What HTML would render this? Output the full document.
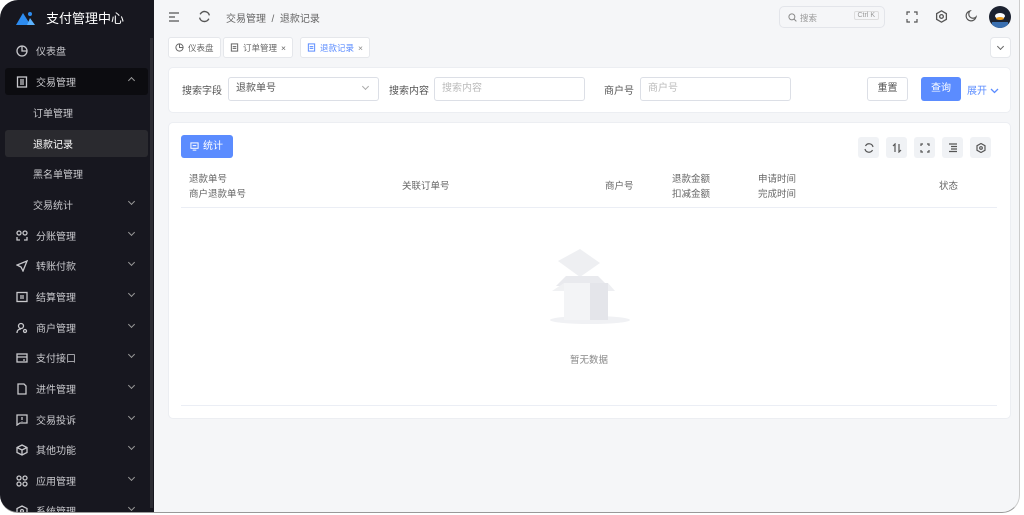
<!DOCTYPE html>
<html><head><meta charset="utf-8"><style>
*{box-sizing:border-box;margin:0;padding:0}
body{width:1024px;height:515px;background:#fff;font-family:"Liberation Sans","Noto Sans CJK SC",sans-serif;font-size:10px;color:#333;position:relative;overflow:hidden}
#app{position:absolute;left:0;top:0;width:1020px;height:513px;border-radius:18px 0 18px 18px;overflow:hidden;background:#f5f6f8;border-right:1px solid #ccc;border-bottom:1px solid #999}
#side{position:absolute;left:0;top:0;width:154px;height:100%;background:#17171f;color:#c8c8cc}
#side .sb{position:absolute;left:150px;top:38px;width:3px;height:470px;background:#2c2c33}
.logo{position:absolute;left:16px;top:8px;color:#fff;font-size:13px;display:flex;align-items:center;gap:8px}
.it{position:absolute;left:5px;width:143px;height:27px;display:flex;align-items:center;padding-left:11px;font-size:10px;border-radius:3px}
.it svg{width:12px;height:12px;margin-right:8px;stroke:#c8c8cc;fill:none;stroke-width:1.3}
.it .ar{position:absolute;right:14px;top:8px;width:5px;height:5px;border-right:1px solid #999;border-bottom:1px solid #999;transform:rotate(45deg)}
.it.sub{padding-left:28px}
#main{position:absolute;left:154px;top:0;right:0;bottom:0}
.card{position:absolute;background:#fff;border-radius:5px;border:1px solid #eceef2}
.inp{position:absolute;height:24px;border:1px solid #dcdfe6;border-radius:3px;padding-left:7px;line-height:22px;color:#bbb;background:#fff}
.lbl{position:absolute;color:#555}
.ib{position:absolute;top:137px;width:21px;height:21px;background:#f0f2f5;border-radius:3px;display:flex;align-items:center;justify-content:center}
.ib svg{width:10px;height:10px;stroke:#555;fill:none;stroke-width:1.2}
.th{position:absolute;color:#666;font-size:9.5px;line-height:15px}
.tab{position:absolute;top:37px;height:21px;background:#fff;border:1px solid #e5e7eb;border-radius:3px;display:flex;align-items:center;padding:0 6px;font-size:8.5px;color:#666;gap:4px}
.tab svg{width:9px;height:9px;fill:none;stroke:currentColor;stroke-width:1.1}
</style></head><body>
<div id="app">
<div id="side">
<div class="logo"><svg width="22" height="16" viewBox="0 0 22 16"><path d="M0 15 L7 3 L12 11 L14 15Z" fill="#2d8cf0"/><circle cx="14" cy="4" r="2" fill="#2d8cf0"/><path d="M11 15 L14 8 L19 15Z" fill="#5cb3ff"/></svg>支付管理中心</div>
<div class="it" style="top:37px"><svg viewBox="0 0 12 12"><circle cx="6" cy="6" r="5"/><path d="M6 1v5h5"/></svg>仪表盘</div>
<div class="it" style="top:68px;background:#0c0c10"><svg viewBox="0 0 12 12"><rect x="1.5" y="1" width="9" height="10"/><path d="M4 4h4M4 6h4M4 8h4"/></svg>交易管理<span class="ar" style="transform:rotate(225deg);top:10px"></span></div>
<div class="it sub" style="top:99px">订单管理</div>
<div class="it sub" style="top:130px;background:#2a2a2f;color:#fff">退款记录</div>
<div class="it sub" style="top:160px">黑名单管理</div>
<div class="it sub" style="top:191px">交易统计<span class="ar"></span></div>
<div class="it" style="top:222px"><svg viewBox="0 0 12 12"><circle cx="3" cy="3" r="2"/><circle cx="9" cy="3" r="2"/><path d="M1 7v3h3M11 7v3H8"/></svg>分账管理<span class="ar"></span></div>
<div class="it" style="top:252px"><svg viewBox="0 0 12 12"><path d="M11 1L1 5l4 2 2 4z"/></svg>转账付款<span class="ar"></span></div>
<div class="it" style="top:283px"><svg viewBox="0 0 12 12"><rect x="1" y="1.5" width="10" height="9"/><path d="M4 5h4M4 7h4"/></svg>结算管理<span class="ar"></span></div>
<div class="it" style="top:314px"><svg viewBox="0 0 12 12"><circle cx="5" cy="4" r="2.5"/><path d="M1 11c0-3 2-4 4-4"/><circle cx="9" cy="9" r="1.5"/></svg>商户管理<span class="ar"></span></div>
<div class="it" style="top:344px"><svg viewBox="0 0 12 12"><rect x="1" y="2" width="10" height="8"/><path d="M1 5h10M7 8h2"/></svg>支付接口<span class="ar"></span></div>
<div class="it" style="top:375px"><svg viewBox="0 0 12 12"><path d="M2 1h6l2 2v8H2z"/></svg>进件管理<span class="ar"></span></div>
<div class="it" style="top:406px"><svg viewBox="0 0 12 12"><path d="M1 1h10v8H4l-3 2z"/><path d="M6 3v3M6 7v.5"/></svg>交易投诉<span class="ar"></span></div>
<div class="it" style="top:436px"><svg viewBox="0 0 12 12"><path d="M6 1l5 2.5v5L6 11 1 8.5v-5z"/><path d="M1 3.5L6 6l5-2.5M6 6v5"/></svg>其他功能<span class="ar"></span></div>
<div class="it" style="top:467px"><svg viewBox="0 0 12 12"><circle cx="3" cy="3" r="2"/><circle cx="9" cy="3" r="2"/><circle cx="3" cy="9" r="2"/><circle cx="9" cy="9" r="2"/></svg>应用管理<span class="ar"></span></div>
<div class="it" style="top:497px"><svg viewBox="0 0 12 12"><path d="M6 1l5 2.5v5L6 11 1 8.5v-5z"/><circle cx="6" cy="6" r="1.5"/></svg>系统管理<span class="ar"></span></div>
<div class="sb"></div>
</div>
<div id="main">
<svg style="position:absolute;left:14px;top:11px" width="12" height="12" viewBox="0 0 12 12" fill="none" stroke="#555" stroke-width="1.2"><path d="M1 2h10M1 6h6M1 10h10"/></svg>
<svg style="position:absolute;left:44px;top:10px" width="13" height="13" viewBox="0 0 12 12" fill="none" stroke="#555" stroke-width="1.3"><path d="M10.5 5A4.5 4.5 0 0 0 2 4M1.5 7A4.5 4.5 0 0 0 10 8"/></svg>
<div style="position:absolute;left:72px;top:10px;color:#666;font-size:10px">交易管理 &nbsp;/ &nbsp;退款记录</div>
<div style="position:absolute;left:625px;top:6px;width:106px;height:22px;border:1px solid #e3e5ea;border-radius:5px;color:#999;font-size:8.5px;padding:5px 0 0 20px"><svg style="position:absolute;left:8px;top:6px" width="9" height="9" viewBox="0 0 10 10" fill="none" stroke="#888" stroke-width="1.1"><circle cx="4.3" cy="4.3" r="3.3"/><path d="M6.8 6.8L9.3 9.3"/></svg>搜索<span style="position:absolute;right:5px;top:4px;border:1px solid #ddd;border-radius:2px;font-size:7px;padding:0 3px">Ctrl K</span></div>
<svg style="position:absolute;left:752px;top:11px" width="12" height="12" viewBox="0 0 12 12" fill="none" stroke="#555" stroke-width="1.2"><path d="M1 4V1h3M8 1h3v3M11 8v3H8M4 11H1V8"/></svg>
<svg style="position:absolute;left:781px;top:10px" width="13" height="13" viewBox="0 0 12 12" fill="none" stroke="#555" stroke-width="1.2"><path d="M6 .8l4.5 2.6v5.2L6 11.2 1.5 8.6V3.4z"/><circle cx="6" cy="6" r="1.7"/></svg>
<svg style="position:absolute;left:811px;top:10px" width="12" height="12" viewBox="0 0 12 12" fill="none" stroke="#555" stroke-width="1.2"><path d="M5 1a5 5 0 1 0 6 6A4 4 0 0 1 5 1z"/></svg>
<div style="position:absolute;left:835px;top:6px;width:22px;height:22px;border-radius:50%;background:#1c2230;overflow:hidden"><div style="position:absolute;left:6px;top:7px;width:10px;height:6px;background:#fff;border-radius:50%"></div><div style="position:absolute;left:7px;top:11px;width:8px;height:3px;background:#f0a020;border-radius:50%"></div><div style="position:absolute;left:3px;top:16px;width:16px;height:6px;background:#3a6fb0"></div></div>
<div class="tab" style="left:14px"><svg viewBox="0 0 10 10"><circle cx="5" cy="5" r="4"/><path d="M5 1v4h4"/></svg>仪表盘</div>
<div class="tab" style="left:69px"><svg viewBox="0 0 10 10"><rect x="1.5" y="1" width="7" height="8"/><path d="M3 4h4M3 6h4"/></svg>订单管理 <span>×</span></div>
<div class="tab" style="left:146px;color:#5b8cff"><svg viewBox="0 0 10 10"><rect x="1.5" y="1" width="7" height="8"/><path d="M3 4h4M3 6h4"/></svg>退款记录 <span style="color:#888">×</span></div>
<div style="position:absolute;left:836px;top:37px;width:21px;height:21px;background:#fff;border:1px solid #e5e7eb;border-radius:4px"><div style="position:absolute;left:7px;top:6px;width:5px;height:5px;border-right:1px solid #666;border-bottom:1px solid #666;transform:rotate(45deg)"></div></div>
<div class="card" style="left:14px;top:67px;width:843px;height:46px"></div>
<div class="lbl" style="left:28px;top:82px">搜索字段</div>
<div class="inp" style="left:74px;top:77px;width:151px;color:#555">退款单号<span style="position:absolute;right:10px;top:6px;width:5px;height:5px;border-right:1px solid #aaa;border-bottom:1px solid #aaa;transform:rotate(45deg)"></span></div>
<div class="lbl" style="left:235px;top:82px">搜索内容</div>
<div class="inp" style="left:280px;top:77px;width:151px">搜索内容</div>
<div class="lbl" style="left:450px;top:82px">商户号</div>
<div class="inp" style="left:486px;top:77px;width:151px">商户号</div>
<div style="position:absolute;left:713px;top:77px;width:41px;height:24px;border:1px solid #dcdfe6;border-radius:3px;background:#fff;text-align:center;line-height:22px;color:#555">重置</div>
<div style="position:absolute;left:767px;top:77px;width:40px;height:24px;border-radius:3px;background:#5b8cff;text-align:center;line-height:24px;color:#fff">查询</div>
<div style="position:absolute;left:813px;top:82px;color:#5b8cff">展开 <svg width="9" height="6" viewBox="0 0 9 6" fill="none" stroke="#5b8cff" stroke-width="1.3"><path d="M1 1l3.5 3.5L8 1"/></svg></div>
<div class="card" style="left:14px;top:122px;width:843px;height:297px"></div>
<div style="position:absolute;left:27px;top:135px;width:52px;height:23px;border-radius:3px;background:#5b8cff;color:#fff;line-height:23px;padding-left:22px"><svg style="position:absolute;left:9px;top:7px" width="9" height="9" viewBox="0 0 10 10" fill="none" stroke="#fff" stroke-width="1.1"><rect x="1" y="1" width="8" height="6"/><path d="M3 9h4M3 4h4"/></svg>统计</div>
<div class="ib" style="left:704px"><svg viewBox="0 0 10 10"><path d="M9 4A4 4 0 0 0 1.5 3M1 6a4 4 0 0 0 7.5 1"/></svg></div>
<div class="ib" style="left:732px"><svg viewBox="0 0 10 10"><path d="M3 9V1L1 3M7 1v8l2-2"/></svg></div>
<div class="ib" style="left:760px"><svg viewBox="0 0 10 10"><path d="M1 3V1h2M7 1h2v2M9 7v2H7M3 9H1V7"/></svg></div>
<div class="ib" style="left:788px"><svg viewBox="0 0 10 10"><path d="M1 1h8M3 3.5h6M3 6h6M1 8.5h8"/></svg></div>
<div class="ib" style="left:816px"><svg viewBox="0 0 10 10"><path d="M5 .5l4 2.2v4.6L5 9.5 1 7.3V2.7z"/><circle cx="5" cy="5" r="1.3"/></svg></div>
<div class="th" style="left:35px;top:172px">退款单号<br>商户退款单号</div>
<div class="th" style="left:248px;top:179px">关联订单号</div>
<div class="th" style="left:451px;top:179px">商户号</div>
<div class="th" style="left:518px;top:172px">退款金额<br>扣减金额</div>
<div class="th" style="left:604px;top:172px">申请时间<br>完成时间</div>
<div class="th" style="left:785px;top:179px">状态</div>
<div style="position:absolute;left:27px;top:207px;width:816px;height:1px;background:#ebeef5"></div>
<div style="position:absolute;left:27px;top:405px;width:816px;height:1px;background:#ebeef5"></div>
<svg style="position:absolute;left:392px;top:243px" width="90" height="82" viewBox="0 0 90 82"><ellipse cx="44" cy="77" rx="40" ry="4" fill="#f0f1f4"/><path d="M12 18l22-12 20 14-20 14z" fill="#eeeff2"/><path d="M10 43l10-10h32l10 10z" fill="#e9eaee"/><rect x="18" y="40" width="26" height="37" fill="#f3f4f6"/><rect x="44" y="40" width="18" height="37" fill="#e4e5ea"/><path d="M62 40l7 8-7 0z" fill="#eeeff2"/><path d="M6 48l12-8v8z" fill="#f0f1f3"/></svg>
<div style="position:absolute;left:416px;top:352px;color:#888;font-size:9.5px">暂无数据</div>
</div>
</div>
</body></html>
